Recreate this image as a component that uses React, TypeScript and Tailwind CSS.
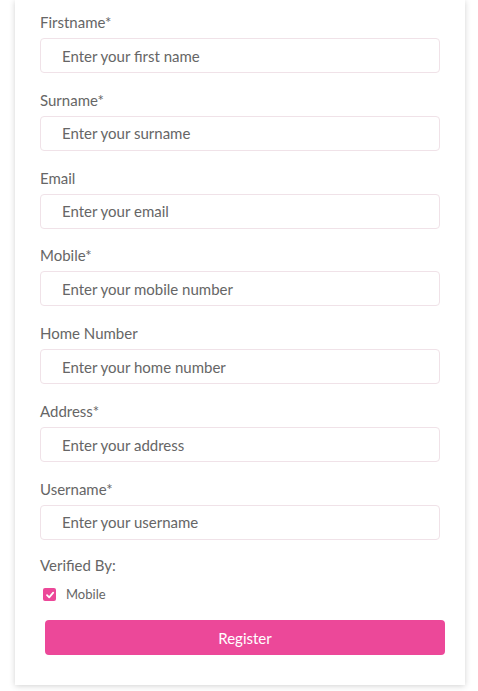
import React from "react";

const fields = [
  { label: "Firstname*", ph: "Enter your first name" },
  { label: "Surname*", ph: "Enter your surname" },
  { label: "Email", ph: "Enter your email" },
  { label: "Mobile*", ph: "Enter your mobile number" },
  { label: "Home Number", ph: "Enter your home number" },
  { label: "Address*", ph: "Enter your address" },
  { label: "Username*", ph: "Enter your username" },
];

export default function App() {
  return (
    <div className="min-h-[691px] bg-white" style={{ fontFamily: "Lato, 'Open Sans', sans-serif" }}>
      <div className="ml-[15px] w-[450px] bg-white shadow-[0_1px_6px_rgba(0,0,0,0.18)] px-[25px] pt-[12px] pb-[30px] flex flex-col items-start">
        {fields.map((f) => (
          <div key={f.label} className="mb-[16.83px]">
            <div className="text-[15px] leading-[20px] text-[#666] mb-[6px]">{f.label}</div>
            <input
              placeholder={f.ph}
              className="w-[400px] h-[35px] border border-[#f0e2e8] rounded-[4px] pl-[21px] text-[15px] placeholder:text-[#666] outline-none"
            />
          </div>
        ))}
        <div className="text-[15px] leading-[20px] text-[#666] -mt-[2px]">Verified By:</div>
        <label className="flex items-center mt-[10px] ml-[3px]">
          <span className="w-[13px] h-[13px] rounded-[2px] bg-[#ec4899] flex items-center justify-center">
            <svg width="10" height="10" viewBox="0 0 10 10">
              <path d="M2 5.2 L4.2 7.4 L8.2 2.6" stroke="white" strokeWidth="1.8" fill="none" strokeLinecap="round" strokeLinejoin="round" />
            </svg>
          </span>
          <span className="ml-[10px] text-[13px] text-[#666]">Mobile</span>
        </label>
        <button className="mt-[16px] ml-[5px] w-[400px] h-[35px] rounded-[4px] bg-[#ec4899] text-white text-[15px]">
          Register
        </button>
      </div>
    </div>
  );
}
